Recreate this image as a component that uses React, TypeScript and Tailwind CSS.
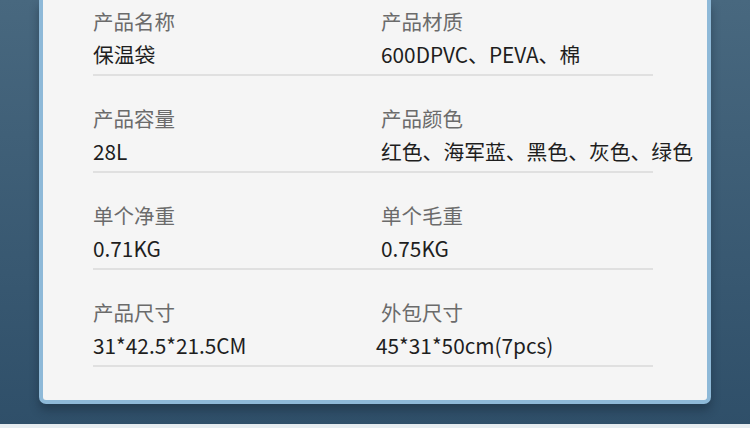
const rows = [
  {
    left: { label: "产品名称", value: "保温袋" },
    right: { label: "产品材质", value: "600DPVC、PEVA、棉" },
  },
  {
    left: { label: "产品容量", value: "28L" },
    right: { label: "产品颜色", value: "红色、海军蓝、黑色、灰色、绿色" },
  },
  {
    left: { label: "单个净重", value: "0.71KG" },
    right: { label: "单个毛重", value: "0.75KG" },
  },
  {
    left: { label: "产品尺寸", value: "31*42.5*21.5CM" },
    right: { label: "外包尺寸", value: "45*31*50cm(7pcs)", shift: true },
  },
];

type Cell = { label: string; value: string; shift?: boolean };

const SpecCell = ({ cell }: { cell: Cell }) => {
  return (
    <div className="flex flex-col gap-[5px]">
      <div className="text-[20.5px] leading-[28px] text-[#6b6b6b]">
        {cell.label}
      </div>
      <div
        className={
          cell.shift
            ? "-ml-[5px] whitespace-nowrap text-[20.8px] leading-[28px] text-[#1e1e1e]"
            : "whitespace-nowrap text-[20.8px] leading-[28px] text-[#1e1e1e]"
        }
      >
        {cell.value}
      </div>
    </div>
  );
};

export default function App() {
  return (
    <div
      className="flex h-[428px] w-[750px] flex-col overflow-hidden bg-gradient-to-b from-[#48687f] to-[#2f4f69]"
      style={{ fontFamily: '"Noto Sans CJK SC", "Noto Sans", sans-serif' }}
    >
      <div className="mx-[39px] h-[404px] shrink-0 rounded-b-[7px] border-x-[4px] border-b-[4px] border-[#8eb9d8] bg-[#f5f5f5] shadow-[0_6px_10px_rgba(20,35,50,0.45)]">
        <div className="pl-[50px] pt-[7px]">
          {rows.map((row, i) => (
            <div key={i} className={i === 0 ? "" : "pt-[28px]"}>
              <div className="grid w-[560px] grid-cols-[288px_272px]">
                <SpecCell cell={row.left} />
                <SpecCell cell={row.right} />
              </div>
              <div className="mt-[6px] h-[2px] w-[560px] bg-[#e0e0e0]" />
            </div>
          ))}
        </div>
      </div>
      <div className="flex-1" />
      <div className="h-[4px] bg-[#e6ecf0]" />
    </div>
  );
}
